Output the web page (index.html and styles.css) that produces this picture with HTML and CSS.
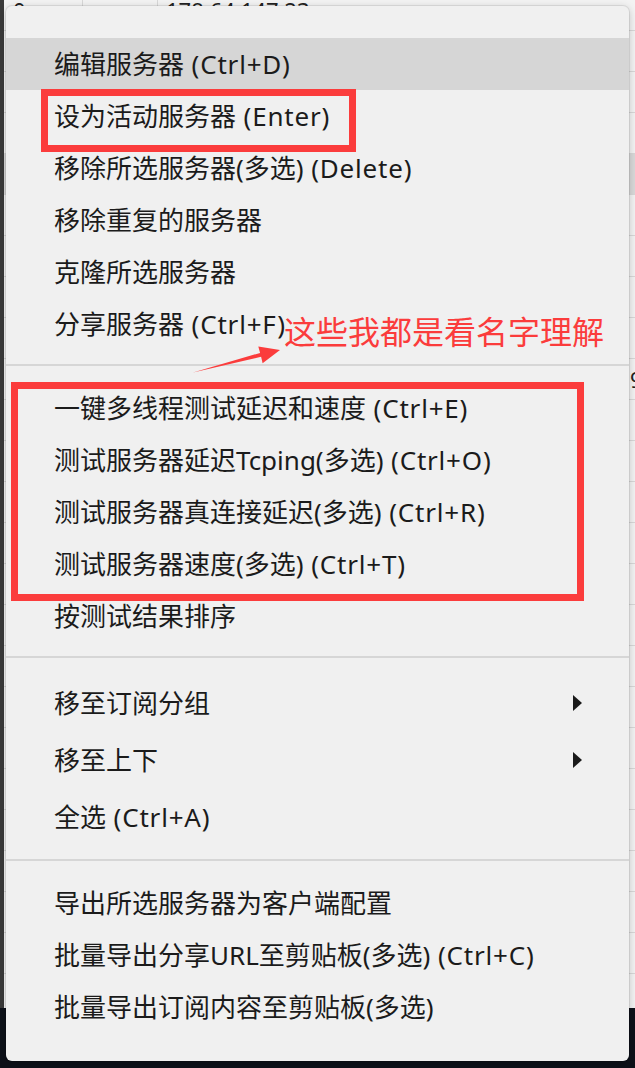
FILE: index.html
```html
<!DOCTYPE html>
<html lang="zh-CN">
<head>
<meta charset="utf-8">
<title>Menu</title>
<link rel="stylesheet" href="styles.css">
</head>
<body>
<div class="app">
  <div class="grid">
    <div class="row"><span class="c c1">0</span><span class="c c2"></span><span class="c c3">178.64.147.23</span><span class="c c4"></span></div>
    <div class="row"><span class="c c1"></span><span class="c c2"></span><span class="c c3"></span><span class="c c4"></span></div>
    <div class="row"><span class="c c1"></span><span class="c c2"></span><span class="c c3"></span><span class="c c4"></span></div>
    <div class="row"><span class="c c1"></span><span class="c c2"></span><span class="c c3"></span><span class="c c4"></span></div>
    <div class="row sel"><span class="c c1"></span><span class="c c2"></span><span class="c c3"></span><span class="c c4"></span></div>
    <div class="row"><span class="c c1"></span><span class="c c2"></span><span class="c c3"></span><span class="c c4"></span></div>
    <div class="row"><span class="c c1"></span><span class="c c2"></span><span class="c c3"></span><span class="c c4"></span></div>
    <div class="row"><span class="c c1"></span><span class="c c2"></span><span class="c c3"></span><span class="c c4"></span></div>
    <div class="row"><span class="c c1"></span><span class="c c2"></span><span class="c c3"></span><span class="c c4"></span></div>
    <div class="row"><span class="c c1"></span><span class="c c2"></span><span class="c c3"></span><span class="c c4">9</span></div>
    <div class="row"><span class="c c1"></span><span class="c c2"></span><span class="c c3"></span><span class="c c4"></span></div>
    <div class="row"><span class="c c1"></span><span class="c c2"></span><span class="c c3"></span><span class="c c4"></span></div>
    <div class="row"><span class="c c1"></span><span class="c c2"></span><span class="c c3"></span><span class="c c4"></span></div>
    <div class="row"><span class="c c1"></span><span class="c c2"></span><span class="c c3"></span><span class="c c4"></span></div>
    <div class="row"><span class="c c1"></span><span class="c c2"></span><span class="c c3"></span><span class="c c4"></span></div>
    <div class="row"><span class="c c1"></span><span class="c c2"></span><span class="c c3"></span><span class="c c4"></span></div>
    <div class="row"><span class="c c1"></span><span class="c c2"></span><span class="c c3"></span><span class="c c4"></span></div>
    <div class="row"><span class="c c1"></span><span class="c c2"></span><span class="c c3"></span><span class="c c4"></span></div>
    <div class="row"><span class="c c1"></span><span class="c c2"></span><span class="c c3"></span><span class="c c4"></span></div>
    <div class="row"><span class="c c1"></span><span class="c c2"></span><span class="c c3"></span><span class="c c4"></span></div>
    <div class="row"><span class="c c1"></span><span class="c c2"></span><span class="c c3"></span><span class="c c4"></span></div>
    <div class="row"><span class="c c1"></span><span class="c c2"></span><span class="c c3"></span><span class="c c4"></span></div>
    <div class="row"><span class="c c1"></span><span class="c c2"></span><span class="c c3"></span><span class="c c4"></span></div>
    <div class="row"><span class="c c1"></span><span class="c c2"></span><span class="c c3"></span><span class="c c4"></span></div>
    <div class="row"><span class="c c1"></span><span class="c c2"></span><span class="c c3"></span><span class="c c4"></span></div>
  </div>
</div>

<div class="menu">
  <div class="item hover">编辑服务器<span class="key"> (Ctrl+D)</span></div>
  <div class="item">设为活动服务器<span class="key"> (Enter)</span></div>
  <div class="item">移除所选服务器(多选)<span class="key"> (Delete)</span></div>
  <div class="item">移除重复的服务器</div>
  <div class="item">克隆所选服务器</div>
  <div class="item">分享服务器<span class="key"> (Ctrl+F)</span></div>
  <div class="sep"></div>
  <div class="item">一键多线程测试延迟和速度<span class="key"> (Ctrl+E)</span></div>
  <div class="item">测试服务器延迟Tcping(多选)<span class="key"> (Ctrl+O)</span></div>
  <div class="item">测试服务器真连接延迟(多选)<span class="key"> (Ctrl+R)</span></div>
  <div class="item">测试服务器速度(多选)<span class="key"> (Ctrl+T)</span></div>
  <div class="item">按测试结果排序</div>
  <div class="sep"></div>
  <div class="item tall"><span>移至订阅分组</span><span class="sub"></span></div>
  <div class="item tall"><span>移至上下</span><span class="sub"></span></div>
  <div class="item tall">全选<span class="key"> (Ctrl+A)</span></div>
  <div class="sep"></div>
  <div class="item">导出所选服务器为客户端配置</div>
  <div class="item">批量导出分享URL至剪贴板(多选)<span class="key"> (Ctrl+C)</span></div>
  <div class="item">批量导出订阅内容至剪贴板(多选)</div>
</div>

<div class="mark box1"></div>
<div class="mark box2"></div>
<div class="note">这些我都是看名字理解</div>
<svg class="arrow" width="95" height="40" viewBox="0 0 95 40">
  <polygon points="3,32.5 71.1,16.8 72.6,23.2 90,10 68.3,6.6 70.1,12.9" fill="#fb3c3c"/>
</svg>
</body>
</html>
```
FILE: styles.css
```css
html, body {
  margin: 0;
  padding: 0;
}
body {
  width: 635px;
  height: 1068px;
  overflow: hidden;
  position: relative;
  background: #0d1119;
  font-family: "Noto Sans", "Noto Sans CJK SC", sans-serif;
}

/* backdrop window */
.app {
  height: 1008px;
  background: #f3f3f3;
  border-left: 4px solid #3a3a3a;
  overflow: hidden;
}
.grid {
  margin-top: -10px;
}
.row {
  display: flex;
  height: 41px;
  box-sizing: border-box;
  border-bottom: 1px solid #d8d8d8;
  font-size: 22px;
  line-height: 40px;
  color: #222;
}
.row.sel {
  background: #d9d9d9;
}
.c {
  display: block;
  box-sizing: border-box;
  height: 40px;
  white-space: nowrap;
  overflow: hidden;
}
.c1 {
  width: 79px;
  padding-left: 9px;
  border-right: 1px solid #d8d8d8;
}
.c2 {
  width: 75px;
  border-right: 1px solid #d8d8d8;
}
.c3 {
  width: 471px;
  padding-left: 8px;
}
.c4 {
  flex: 1;
  padding-left: 1px;
}

/* context menu */
.menu {
  position: absolute;
  left: 6px;
  top: 6px;
  width: 623px;
  height: 1055px;
  box-sizing: border-box;
  padding-top: 32px;
  background: #f0f0f0;
  border-radius: 6px;
  box-shadow: 0 0 0 1px rgba(0, 0, 0, 0.07), 0 2px 8px rgba(0, 0, 0, 0.22);
  font-size: 26px;
  color: #1b1b1b;
}
.item {
  display: flex;
  align-items: center;
  height: 52px;
  padding: 0 48px;
  white-space: pre;
  line-height: 52px;
}
.item.tall {
  height: 57px;
}
.item.hover {
  background: #d6d6d6;
}
.key {
  letter-spacing: 0.8px;
}
.sep {
  height: 2px;
  background: #d6d6d6;
  margin: 14px 0 16px;
}
.sub {
  margin-left: auto;
  margin-right: -1px;
  width: 0;
  height: 0;
  border-left: 9px solid #1a1a1a;
  border-top: 8px solid transparent;
  border-bottom: 8px solid transparent;
}

/* annotations */
.mark {
  position: absolute;
  box-sizing: border-box;
  border: 7px solid #fb3c3c;
}
.box1 {
  left: 41px;
  top: 89px;
  width: 315px;
  height: 63px;
}
.box2 {
  left: 11px;
  top: 382px;
  width: 573px;
  height: 219px;
}
.note {
  position: absolute;
  left: 284px;
  top: 314px;
  font-family: "Noto Sans CJK SC", sans-serif;
  font-size: 32px;
  line-height: 1;
  color: #fb3c3c;
  white-space: nowrap;
}
.arrow {
  position: absolute;
  left: 190px;
  top: 340px;
}
```
